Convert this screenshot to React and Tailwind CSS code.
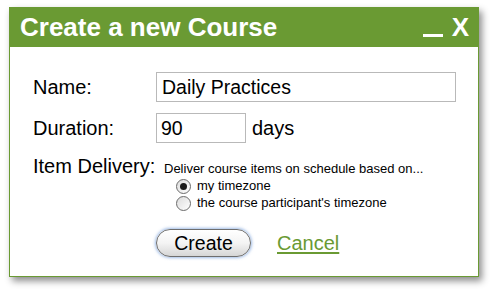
import { useState } from 'react';

const Radio = ({ checked, label, onClick }) => {
  return (
    <label className="flex items-start h-[17px] cursor-pointer" onClick={onClick}>
      <span className="mt-[2px] w-[15px] h-[15px] rounded-full border border-[#6b6b6b] bg-gradient-to-br from-[#dcdcdc] to-white flex items-center justify-center shrink-0">
        {checked && <span className="w-[7px] h-[7px] rounded-full bg-[#1a1a1a]"></span>}
      </span>
      <span className="ml-[6px] text-[13px] leading-[17px] text-black">{label}</span>
    </label>
  );
};

export default function App() {
  const [zone, setZone] = useState('mine');

  return (
    <div className="w-[496px] h-[296px] bg-white pt-[7px] pl-[9px] font-['Liberation_Sans',Arial,sans-serif]">
      <div className="w-[470px] h-[270px] border border-[#6a9a33] bg-white shadow-[3px_4px_7px_rgba(0,0,0,0.45)] flex flex-col">
        {/* Title bar */}
        <div className="h-[39px] bg-[#6a9a33] flex items-start justify-between pl-[10px] pr-[9px] pt-[6px]">
          <h1 className="text-[26px] leading-[26px] font-bold text-white">Create a new Course</h1>
          <div className="flex items-start">
            <div className="w-[20px] h-[3px] bg-white mt-[20px]"></div>
            <span className="ml-[9px] text-[26px] leading-[26px] font-bold text-white">X</span>
          </div>
        </div>

        {/* Body */}
        <div className="pl-[23px] text-black">
          <div className="flex items-center mt-[25px] h-[30px]">
            <span className="w-[123px] text-[20px] leading-[20px]">Name:</span>
            <input
              defaultValue="Daily Practices"
              className="w-[300px] h-[30px] border border-[#b9b9b9] px-[5px] text-[19.5px] outline-none"
            />
          </div>

          <div className="flex items-center mt-[11px] h-[30px]">
            <span className="w-[123px] text-[20px] leading-[20px]">Duration:</span>
            <input
              defaultValue="90"
              className="w-[90px] h-[30px] border border-[#b9b9b9] px-[4px] text-[19.5px] outline-none"
            />
            <span className="ml-[6px] text-[20px] leading-[20px]">days</span>
          </div>

          <div className="flex items-baseline mt-[13px]">
            <span className="w-[131px] text-[20px] leading-[20px]">Item Delivery:</span>
            <div className="flex flex-col">
              <span className="text-[13px] leading-[16px]">Deliver course items on schedule based on...</span>
              <div className="pl-[12px] flex flex-col">
                <Radio checked={zone === 'mine'} label="my timezone" onClick={() => setZone('mine')} />
                <Radio checked={zone === 'theirs'} label="the course participant's timezone" onClick={() => setZone('theirs')} />
              </div>
            </div>
          </div>

          <div className="flex items-center ml-[123px] mt-[18px]">
            <button className="w-[95px] h-[28px] rounded-full border border-[#6e6e6e] bg-gradient-to-b from-white via-[#f4f4f4] to-[#d6d6d6] shadow-[0_0_3px_1px_rgba(120,160,220,0.7)] text-[19.5px] leading-[20px] text-black">
              Create
            </button>
            <a href="#" className="ml-[26px] text-[20px] leading-[20px] text-[#6a9a33] underline underline-offset-[2px]">
              Cancel
            </a>
          </div>
        </div>
      </div>
    </div>
  );
}
